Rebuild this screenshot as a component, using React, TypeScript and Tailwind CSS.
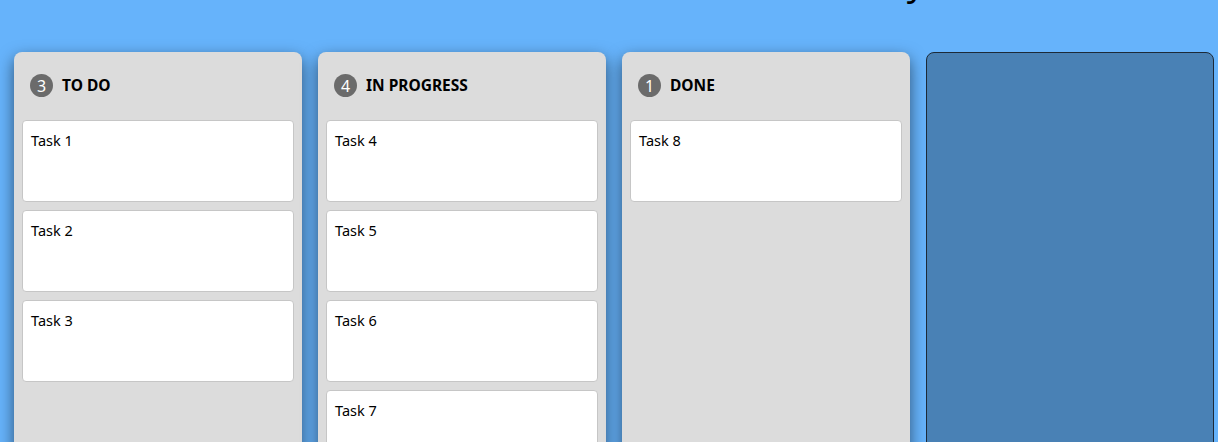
import React from "react";

const columns = [
  { title: "TO DO", count: 3, tasks: ["Task 1", "Task 2", "Task 3"] },
  { title: "IN PROGRESS", count: 4, tasks: ["Task 4", "Task 5", "Task 6", "Task 7"] },
  { title: "DONE", count: 1, tasks: ["Task 8"] },
];

export default function App() {
  return (
    <div
      className="min-h-[442px] h-[442px] overflow-hidden bg-[#66b3fb] relative"
      style={{ fontFamily: '"Noto Sans", "Open Sans", sans-serif' }}
    >
      <h1 className="absolute top-[-42px] right-[293px] text-[36px] font-normal text-black leading-[48px] whitespace-nowrap">
        Kanban Board Made Easy
      </h1>
      <div className="flex items-start gap-4 pl-[14px] pt-[52px]">
        {columns.map((col) => (
          <div
            key={col.title}
            className="w-[288px] h-[600px] shrink-0 bg-[#dcdcdc] rounded-lg shadow-[0_6px_16px_rgba(0,0,0,0.55)]"
          >
            <div className="flex items-center gap-[9px] pl-4 pt-[22px] pb-[23px] h-[68px]">
              <span className="w-[23px] h-[23px] rounded-full bg-[#6b6b6b] text-white text-[16px] flex items-center justify-center leading-none">
                {col.count}
              </span>
              <span className="text-[15.5px] font-bold text-black leading-none">{col.title}</span>
            </div>
            <div className="flex flex-col gap-2 px-2">
              {col.tasks.map((t) => (
                <div
                  key={t}
                  className="h-[82px] bg-white border border-[#c6c6c6] rounded-[4px] px-2 pt-[9px] text-[14.5px] text-black leading-5"
                >
                  {t}
                </div>
              ))}
            </div>
          </div>
        ))}
        <div className="w-[288px] h-[600px] shrink-0 rounded-lg bg-[rgba(0,0,0,0.28)] border border-[#1c2a38]" />
      </div>
    </div>
  );
}
